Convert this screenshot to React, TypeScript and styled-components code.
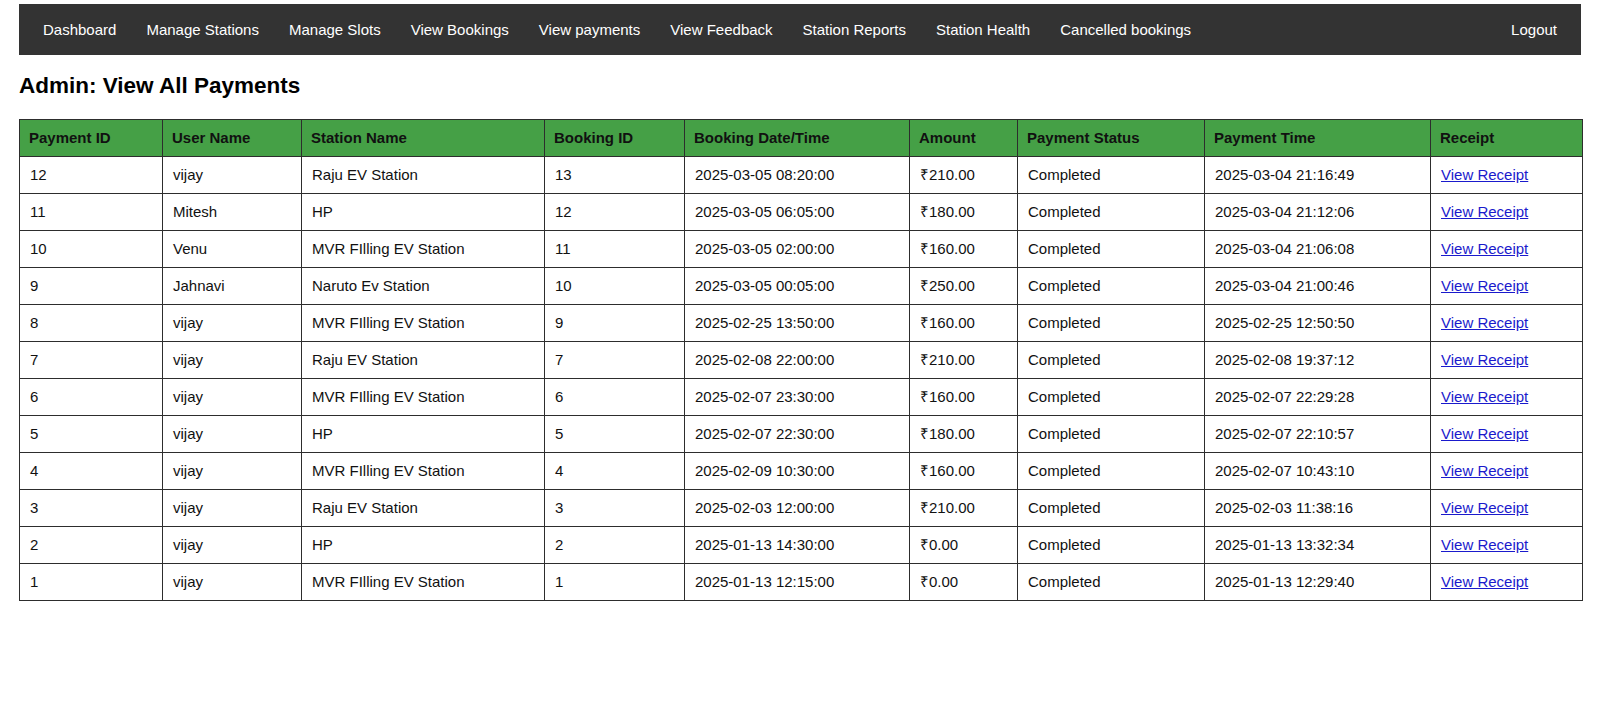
import React from "react";
import styled, { createGlobalStyle } from "styled-components";

const GlobalStyle = createGlobalStyle`
  html, body {
    margin: 0;
    padding: 0;
    background: #ffffff;
    font-family: "Liberation Sans", Arial, sans-serif;
    color: #111;
  }
`;

const Page = styled.div`
  padding: 4px 19px 40px 19px;
`;

const NavBar = styled.nav`
  display: flex;
  align-items: center;
  height: 51px;
  background: #333333;
  padding: 0 9px 0 9px;
`;

const NavLink = styled.a<{ $right?: boolean }>`
  color: #ffffff;
  font-size: 15px;
  line-height: 18px;
  text-decoration: none;
  padding: 0 15px;
  cursor: pointer;
  margin-left: ${(p) => (p.$right ? "auto" : "0")};
`;

const Title = styled.h2`
  font-size: 22.5px;
  line-height: 26px;
  font-weight: bold;
  margin: 18px 0 20px 0;
  color: #000;
`;

const Table = styled.table`
  width: 1563px;
  border-collapse: collapse;
  table-layout: fixed;
  font-size: 15px;
`;

const Th = styled.th`
  background: #45a046;
  color: #111;
  font-weight: bold;
  text-align: left;
  border: 1px solid #2d2d2d;
  padding: 9px 10px 9px 9px;
  line-height: 18px;
`;

const Td = styled.td`
  border: 1px solid #2d2d2d;
  padding: 9px 10px;
  line-height: 18px;
  color: #111;
  white-space: nowrap;
`;

const ReceiptLink = styled.a`
  color: #1a1acc;
  text-decoration: underline;
  cursor: pointer;
`;

const navItems = [
  "Dashboard",
  "Manage Stations",
  "Manage Slots",
  "View Bookings",
  "View payments",
  "View Feedback",
  "Station Reports",
  "Station Health",
  "Cancelled bookings",
];

const columns: { label: string; width: number }[] = [
  { label: "Payment ID", width: 143 },
  { label: "User Name", width: 139 },
  { label: "Station Name", width: 243 },
  { label: "Booking ID", width: 140 },
  { label: "Booking Date/Time", width: 225 },
  { label: "Amount", width: 108 },
  { label: "Payment Status", width: 187 },
  { label: "Payment Time", width: 226 },
  { label: "Receipt", width: 152 },
];

type Row = [number, string, string, number, string, string, string];

const rows: Row[] = [
  [12, "vijay", "Raju EV Station", 13, "2025-03-05 08:20:00", "₹210.00", "2025-03-04 21:16:49"],
  [11, "Mitesh", "HP", 12, "2025-03-05 06:05:00", "₹180.00", "2025-03-04 21:12:06"],
  [10, "Venu", "MVR FIlling EV Station", 11, "2025-03-05 02:00:00", "₹160.00", "2025-03-04 21:06:08"],
  [9, "Jahnavi", "Naruto Ev Station", 10, "2025-03-05 00:05:00", "₹250.00", "2025-03-04 21:00:46"],
  [8, "vijay", "MVR FIlling EV Station", 9, "2025-02-25 13:50:00", "₹160.00", "2025-02-25 12:50:50"],
  [7, "vijay", "Raju EV Station", 7, "2025-02-08 22:00:00", "₹210.00", "2025-02-08 19:37:12"],
  [6, "vijay", "MVR FIlling EV Station", 6, "2025-02-07 23:30:00", "₹160.00", "2025-02-07 22:29:28"],
  [5, "vijay", "HP", 5, "2025-02-07 22:30:00", "₹180.00", "2025-02-07 22:10:57"],
  [4, "vijay", "MVR FIlling EV Station", 4, "2025-02-09 10:30:00", "₹160.00", "2025-02-07 10:43:10"],
  [3, "vijay", "Raju EV Station", 3, "2025-02-03 12:00:00", "₹210.00", "2025-02-03 11:38:16"],
  [2, "vijay", "HP", 2, "2025-01-13 14:30:00", "₹0.00", "2025-01-13 13:32:34"],
  [1, "vijay", "MVR FIlling EV Station", 1, "2025-01-13 12:15:00", "₹0.00", "2025-01-13 12:29:40"],
];

export default function App() {
  return (
    <>
      <GlobalStyle />
      <Page>
        <NavBar>
          {navItems.map((n) => (
            <NavLink key={n}>{n}</NavLink>
          ))}
          <NavLink $right>Logout</NavLink>
        </NavBar>
        <Title>Admin: View All Payments</Title>
        <Table>
          <colgroup>
            {columns.map((c) => (
              <col key={c.label} style={{ width: c.width }} />
            ))}
          </colgroup>
          <thead>
            <tr>
              {columns.map((c) => (
                <Th key={c.label}>{c.label}</Th>
              ))}
            </tr>
          </thead>
          <tbody>
            {rows.map((r) => (
              <tr key={r[0]}>
                <Td>{r[0]}</Td>
                <Td>{r[1]}</Td>
                <Td>{r[2]}</Td>
                <Td>{r[3]}</Td>
                <Td>{r[4]}</Td>
                <Td>{r[5]}</Td>
                <Td>Completed</Td>
                <Td>{r[6]}</Td>
                <Td>
                  <ReceiptLink>View Receipt</ReceiptLink>
                </Td>
              </tr>
            ))}
          </tbody>
        </Table>
      </Page>
    </>
  );
}
